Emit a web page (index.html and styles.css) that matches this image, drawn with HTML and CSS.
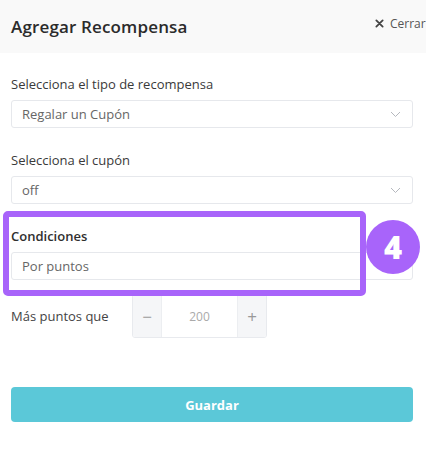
FILE: index.html
```html
<!DOCTYPE html>
<html lang="es">
<head>
<meta charset="utf-8">
<link rel="stylesheet" href="styles.css">
</head>
<body>
<div class="modal">
  <header class="head">
    <h1 class="title">Agregar Recompensa</h1>
    <button class="close"><svg width="9" height="9" viewBox="0 0 10 10"><path d="M1.5 1.5 L8.5 8.5 M8.5 1.5 L1.5 8.5" stroke="#444" stroke-width="2" stroke-linecap="round"/></svg>Cerrar</button>
  </header>
  <div class="body">
    <div class="field">
      <label class="label">Selecciona el tipo de recompensa</label>
      <div class="select"><span>Regalar un Cupón</span><svg class="chev" width="11" height="7" viewBox="0 0 11 7"><path d="M1 1 L5.5 5.5 L10 1" fill="none" stroke="#b5b8be" stroke-width="1"/></svg></div>
    </div>
    <div class="field">
      <label class="label">Selecciona el cupón</label>
      <div class="select"><span>off</span><svg class="chev" width="11" height="7" viewBox="0 0 11 7"><path d="M1 1 L5.5 5.5 L10 1" fill="none" stroke="#b5b8be" stroke-width="1"/></svg></div>
    </div>
    <div class="field cond">
      <label class="label strong">Condiciones</label>
      <div class="select"><span>Por puntos</span></div>
      <div class="badge">4</div>
      <div class="highlight"></div>
    </div>
    <div class="row">
      <span class="row-label">Más puntos que</span>
      <div class="stepper">
        <span class="step">−</span>
        <span class="value">200</span>
        <span class="step">+</span>
      </div>
    </div>
    <button class="save">Guardar</button>
  </div>
</div>
</body>
</html>
```
FILE: styles.css
```css
* { box-sizing: border-box; }
html, body { margin: 0; padding: 0; background: #fff; overflow: hidden; }
body { width: 426px; height: 475px; font-family: "Open Sans", "Liberation Sans", sans-serif; color: #333; }
.modal { width: 426px; }
.head { height: 53px; background: #f9f9f9; display: flex; align-items: center; padding-left: 11px; position: relative; }
.title { margin: 0; font-size: 17px; font-weight: 600; color: #2b2b2b; letter-spacing: 0.15px; }
.close { position: absolute; left: 375px; top: 15px; border: 0; background: none; padding: 0; display: flex; align-items: center; gap: 6px; font-family: inherit; font-size: 12px; color: #555; white-space: nowrap; height: 16px; }
.body { padding: 22px 13px 0 11px; }
.field { display: flex; flex-direction: column; gap: 7px; margin-bottom: 23px; }
.label { font-size: 13px; color: #3a3a3a; line-height: 18px; }
.label.strong { font-weight: 600; color: #2f2f2f; }
.select { height: 28px; border: 1px solid #e6e8ec; border-radius: 3px; display: flex; align-items: center; justify-content: space-between; padding: 0 11px 0 10px; font-size: 13px; color: #666; background: #fff; }
.chev { margin-top: 1px; }
.cond { position: relative; margin-bottom: 14px; }
.highlight { position: absolute; left: -8px; top: -16px; width: 363px; height: 85px; border: 6px solid #a864fa; border-radius: 5px; z-index: 2; }
.badge { position: absolute; left: 355px; top: -7px; width: 54px; height: 54px; border-radius: 50%; background: #a864fa; color: #fff; font-size: 31px; font-weight: 800; display: flex; align-items: center; justify-content: center; z-index: 1; }
.row { display: flex; align-items: center; }
.row-label { width: 121px; font-size: 13px; color: #444; }
.stepper { display: flex; height: 44px; border: 1px solid #e8eaee; border-radius: 3px; overflow: hidden; }
.step { width: 28px; background: #f5f6f8; display: flex; align-items: center; justify-content: center; font-size: 17px; color: #999; }
.value { width: 77px; display: flex; align-items: center; justify-content: center; font-size: 12px; color: #aaa; border-left: 1px solid #eceef1; border-right: 1px solid #eceef1; }
.save { margin-top: 49px; width: 402px; height: 35px; border: 0; border-radius: 4px; background: #5bc8d8; color: #fff; font-family: inherit; font-size: 13px; font-weight: 700; }
```
